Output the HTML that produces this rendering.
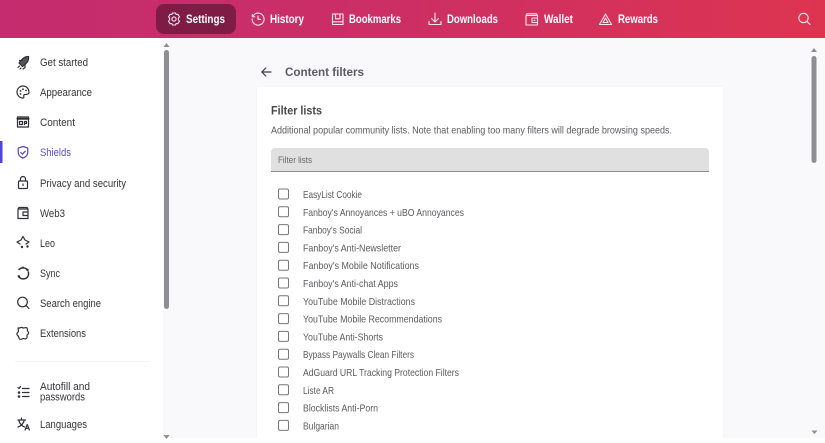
<!DOCTYPE html>
<html><head><meta charset="utf-8"><title>Content filters</title>
<style>
html,body{margin:0;padding:0;width:825px;height:443px;overflow:hidden;background:#f9f9fb}
svg{display:block;font-family:"Liberation Sans",sans-serif;filter:blur(.25px)}
.n{fill:#fff;font-size:11.5px;font-weight:bold}
.s{fill:#36363b;font-size:11.2px}
.l{fill:#5c5c61;font-size:10.2px}
.i{fill:none;stroke:#2f2f35;stroke-width:1.2;stroke-linecap:round;stroke-linejoin:round}
.w{fill:none;stroke:#fbe6ec;stroke-width:1.1;stroke-linecap:round;stroke-linejoin:round}
</style></head><body>
<svg width="825" height="443" viewBox="0 0 825 443" xmlns="http://www.w3.org/2000/svg">
<defs><linearGradient id="g" x1="0" x2="1" y1="0" y2="0"><stop offset="0" stop-color="#c32c6e"/><stop offset=".5" stop-color="#cd2f64"/><stop offset="1" stop-color="#dd3450"/></linearGradient></defs>
<rect width="825" height="443" fill="#f9f9fb"/>
<rect width="825" height="38" fill="url(#g)"/>
<rect x="156" y="4" width="80" height="30" rx="8" fill="#7e1c46"/>

<!-- nav icons -->
<g class="w">
<circle cx="174" cy="19" r="2.100"/><path d="M172.500 13l3 0 .7 1.500 1.700-.2 1.500 2.500-1 1.400v1.600l1 1.400-1.500 2.500-1.700-.2-.7 1.500h-3l-.7-1.500-1.700.2-1.500-2.500 1-1.400v-1.600l-1-1.400 1.500-2.500 1.700.2z"/>
<path d="M253.300 15.500a6 6 0 1 1-1.200 3.500M252.300 14.500v2.300h2.400M258 16v3.300h2.600"/>
<path d="M332.500 14h10.500v10.500h-10.500zM332.500 21.800h10.500M335.500 14v4.800h4.500V14"/>
<path d="M435 13v9M431.500 18.500l3.500 3.500 3.500-3.500M429 21.500v3h12v-3"/>
<path d="M526 15.500h11.500V25H526zM526 15.500l1-1.700h9.500l1 1.700M532 18h5.500v4.500H532zM534 20.300h1"/>
<path d="M605.500 14l6 10.500h-12zM605.500 18l2.500 4.500h-5z"/>
<circle cx="803.500" cy="18" r="4.700"/><path d="M807 21.500l3 3"/>
</g>

<!-- nav text -->
<text class="n" x="186" y="23" textLength="39" lengthAdjust="spacingAndGlyphs">Settings</text>
<text class="n" x="270" y="23" textLength="34" lengthAdjust="spacingAndGlyphs">History</text>
<text class="n" x="349" y="23" textLength="52" lengthAdjust="spacingAndGlyphs">Bookmarks</text>
<text class="n" x="447" y="23" textLength="51" lengthAdjust="spacingAndGlyphs">Downloads</text>
<text class="n" x="544" y="23" textLength="29" lengthAdjust="spacingAndGlyphs">Wallet</text>
<text class="n" x="618" y="23" textLength="40" lengthAdjust="spacingAndGlyphs">Rewards</text>

<!-- sidebar -->
<rect y="38" width="163" height="405" fill="#fff"/>
<rect x="0" y="141" width="2.500" height="22" fill="#4f45d6"/>
<rect x="164" y="50" width="5" height="259" rx="2.500" fill="#8f8f93"/>
<path d="M163.500 47l3-4 3 4z" fill="#8f8f93"/>
<path d="M163.500 435l3 4 3-4z" fill="#8f8f93"/>
<rect x="15" y="361" width="135" height="1" fill="#f4f4f6"/>

<g class="i">
<!-- rocket -->
<path d="M28.500 56.500c-3 0-5 1-7 3.500l-2.500 3 3.500 3.500 3-2.500c2.500-2 3.500-4 3-7.500z" fill="#55555a"/><path d="M19.500 60.500h2.500M25 65v2.500l-2 1.500M18 67.500l1.500-1.500M20 69l1-1"/>
<!-- palette -->
<path d="M23 86a6 6 0 1 0 0 12c2 0-.2-2.300 1-3.200 1-.8 5 .6 5-2.800 0-3.300-2.800-6-6-6z"/>
<!-- content -->
<rect x="17.500" y="117" width="11" height="10"/><path d="M17.500 118.700h11" stroke-width="2"/><rect x="19.500" y="121.500" width="3" height="3"/><path d="M24.500 124.500v-3h2v2h-2"/>
<!-- lock -->
<path d="M20.500 181v-2a2.500 2.500 0 0 1 5 0v2"/><rect x="18.500" y="181" width="9" height="7.500" rx="1"/><path d="M23 184v1.500"/>
<!-- wallet -->
<path d="M18 209h10v9.500H18zM18 209l1-1.500h8l1 1.500M23 212h5v3.500h-5z"/>
<!-- leo -->
<path d="M23 236.500l2 3.500 4 2-3 2M20 244l-3-2 4-2 2-3.500"/>
<!-- sync -->
<path d="M27.500 270a5.700 5.700 0 0 0-8.500-.5M18.300 276a5.700 5.700 0 0 0 9.200 1 5.700 5.700 0 0 0 .8-5" stroke-width="1.500"/>
<!-- search -->
<circle cx="22.500" cy="302" r="4.800"/><path d="M26 305.500l3 3"/>
<!-- extensions -->
<path d="M20 328c1-1.500 3 0 3.500 0 1 0 2.500-1 3.500 0 1 1 0 2.500.5 3 .5.5 1.500 1.500 1 2.500-.5 1-1.500 1-1.500 2 0 1 .5 2-.5 3-1 1-2.500 0-3.500 0-.5 0-2 1.500-3.500.5-1-1-.5-2-1-2.500-.5-.5-2-1.500-1.500-3 .5-1.500 1.500-1.500 1.500-2.500 0-1-.5-2-.5-3z"/>
<!-- autofill -->
<path d="M22.500 388.500h6.500M22.500 392.500h6.500M22.500 396.500h6.500M18 387.500l1 1 1.500-2"/>
<!-- languages -->
<path d="M18 420h7.500M21.500 418v2M19 421c1 3 3 5 5.500 6M24 421c-1 3-3 5-6 6M25 430l2.200-5.500 2.200 5.500M25.800 428.300h2.800"/>
</g>
<g fill="none" stroke="#4f45c9" stroke-width="1.200" stroke-linecap="round" stroke-linejoin="round">
<path d="M23 146.500l4.800 1.600v4c0 3-2.200 5-4.800 6-2.600-1-4.800-3-4.800-6v-4zM20.800 152.500l1.700 1.700 2.700-3"/>
</g>
<g fill="#2f2f35">
<circle cx="20.500" cy="91" r=".9"/><circle cx="23" cy="89.200" r=".9"/><circle cx="26" cy="90.500" r=".9"/><circle cx="20.500" cy="94" r=".9"/>
<circle cx="27.500" cy="246.500" r="1.200"/><circle cx="22" cy="247" r="1.200"/><circle cx="18" cy="238.500" r="0"/>
<circle cx="27.500" cy="270" r="1.200"/><circle cx="19" cy="276.500" r="1.200"/><circle cx="23" cy="267.500" r="1"/>
<circle cx="19" cy="392.500" r="1.300"/><circle cx="19" cy="396.500" r="1.300"/>
</g>

<text class="s" x="40" y="65.800" textLength="48" lengthAdjust="spacingAndGlyphs">Get started</text>
<text class="s" x="40" y="95.800" textLength="52" lengthAdjust="spacingAndGlyphs">Appearance</text>
<text class="s" x="40" y="125.800" textLength="35" lengthAdjust="spacingAndGlyphs">Content</text>
<text class="s" x="40" y="155.800" textLength="31" lengthAdjust="spacingAndGlyphs" style="fill:#5b50c8">Shields</text>
<text class="s" x="40" y="186.800" textLength="86" lengthAdjust="spacingAndGlyphs">Privacy and security</text>
<text class="s" x="40" y="216.800" textLength="25" lengthAdjust="spacingAndGlyphs">Web3</text>
<text class="s" x="40" y="246.800" textLength="15" lengthAdjust="spacingAndGlyphs">Leo</text>
<text class="s" x="40" y="276.800" textLength="20" lengthAdjust="spacingAndGlyphs">Sync</text>
<text class="s" x="40" y="306.800" textLength="61" lengthAdjust="spacingAndGlyphs">Search engine</text>
<text class="s" x="40" y="336.800" textLength="46" lengthAdjust="spacingAndGlyphs">Extensions</text>
<text class="s" x="40" y="390" textLength="50" lengthAdjust="spacingAndGlyphs">Autofill and</text>
<text class="s" x="40" y="400.500" textLength="45" lengthAdjust="spacingAndGlyphs">passwords</text>
<text class="s" x="40" y="427.800" textLength="47" lengthAdjust="spacingAndGlyphs">Languages</text>

<!-- main scrollbar -->
<rect x="811.500" y="56" width="5" height="107" rx="2.500" fill="#8f8f93"/>
<path d="M811 52l3-4 3 4z" fill="#8f8f93"/>
<path d="M811.500 430.500l3 3.500 3-3.500z" fill="#8f8f93"/>

<!-- header of content -->
<path d="M271 72h-9M265.800 68l-4 4 4 4" fill="none" stroke="#3a3a40" stroke-width="1.200" stroke-linecap="round" stroke-linejoin="round"/>
<text x="285" y="76.200" textLength="79" lengthAdjust="spacingAndGlyphs" font-size="12" font-weight="bold" fill="#5c5c61">Content filters</text>

<!-- card -->
<rect x="256.500" y="86.500" width="467" height="360" fill="#f2f2f5"/>
<rect x="257" y="87" width="466" height="360" fill="#fff"/>
<text x="271" y="114.300" textLength="51" lengthAdjust="spacingAndGlyphs" font-size="12" font-weight="bold" fill="#48484d">Filter lists</text>
<text class="l" x="271" y="133.300" textLength="401" lengthAdjust="spacingAndGlyphs">Additional popular community lists. Note that enabling too many filters will degrade browsing speeds.</text>

<path d="M271 172v-20a4 4 0 0 1 4-4h430a4 4 0 0 1 4 4v20z" fill="#e0e0e0"/>
<rect x="271" y="171" width="438" height="1" fill="#8c8c8c"/>
<text x="278" y="163.200" textLength="34" lengthAdjust="spacingAndGlyphs" font-size="9.200" fill="#66666a">Filter lists</text>

<!-- checkboxes -->
<g fill="#fff" stroke="#77777b" stroke-width="1">
<rect x="278.500" y="189" width="10" height="10" rx="1.500"/>
<rect x="278.500" y="206.800" width="10" height="10" rx="1.500"/>
<rect x="278.500" y="224.600" width="10" height="10" rx="1.500"/>
<rect x="278.500" y="242.400" width="10" height="10" rx="1.500"/>
<rect x="278.500" y="260.200" width="10" height="10" rx="1.500"/>
<rect x="278.500" y="278" width="10" height="10" rx="1.500"/>
<rect x="278.500" y="295.800" width="10" height="10" rx="1.500"/>
<rect x="278.500" y="313.600" width="10" height="10" rx="1.500"/>
<rect x="278.500" y="331.400" width="10" height="10" rx="1.500"/>
<rect x="278.500" y="349.200" width="10" height="10" rx="1.500"/>
<rect x="278.500" y="367" width="10" height="10" rx="1.500"/>
<rect x="278.500" y="384.800" width="10" height="10" rx="1.500"/>
<rect x="278.500" y="402.600" width="10" height="10" rx="1.500"/>
<rect x="278.500" y="420.400" width="10" height="10" rx="1.500"/>
</g>
<text class="l" x="303" y="198" textLength="59" lengthAdjust="spacingAndGlyphs">EasyList Cookie</text>
<text class="l" x="303" y="215.800" textLength="161" lengthAdjust="spacingAndGlyphs">Fanboy's Annoyances + uBO Annoyances</text>
<text class="l" x="303" y="233.600" textLength="59" lengthAdjust="spacingAndGlyphs">Fanboy's Social</text>
<text class="l" x="303" y="251.400" textLength="98" lengthAdjust="spacingAndGlyphs">Fanboy's Anti-Newsletter</text>
<text class="l" x="303" y="269.200" textLength="116" lengthAdjust="spacingAndGlyphs">Fanboy's Mobile Notifications</text>
<text class="l" x="303" y="287" textLength="95" lengthAdjust="spacingAndGlyphs">Fanboy's Anti-chat Apps</text>
<text class="l" x="303" y="304.800" textLength="112" lengthAdjust="spacingAndGlyphs">YouTube Mobile Distractions</text>
<text class="l" x="303" y="322.600" textLength="139" lengthAdjust="spacingAndGlyphs">YouTube Mobile Recommendations</text>
<text class="l" x="303" y="340.400" textLength="80" lengthAdjust="spacingAndGlyphs">YouTube Anti-Shorts</text>
<text class="l" x="303" y="358.200" textLength="111" lengthAdjust="spacingAndGlyphs">Bypass Paywalls Clean Filters</text>
<text class="l" x="303" y="376" textLength="156" lengthAdjust="spacingAndGlyphs">AdGuard URL Tracking Protection Filters</text>
<text class="l" x="303" y="393.800" textLength="31" lengthAdjust="spacingAndGlyphs">Liste AR</text>
<text class="l" x="303" y="411.600" textLength="75" lengthAdjust="spacingAndGlyphs">Blocklists Anti-Porn</text>
<text class="l" x="303" y="429.400" textLength="36" lengthAdjust="spacingAndGlyphs">Bulgarian</text>

<!-- bottom white strip -->
<rect x="163" y="438" width="662" height="5" fill="#fff"/>
<path d="M163.500 435l3 4 3-4z" fill="#8f8f93"/>
</svg>
</body></html>
